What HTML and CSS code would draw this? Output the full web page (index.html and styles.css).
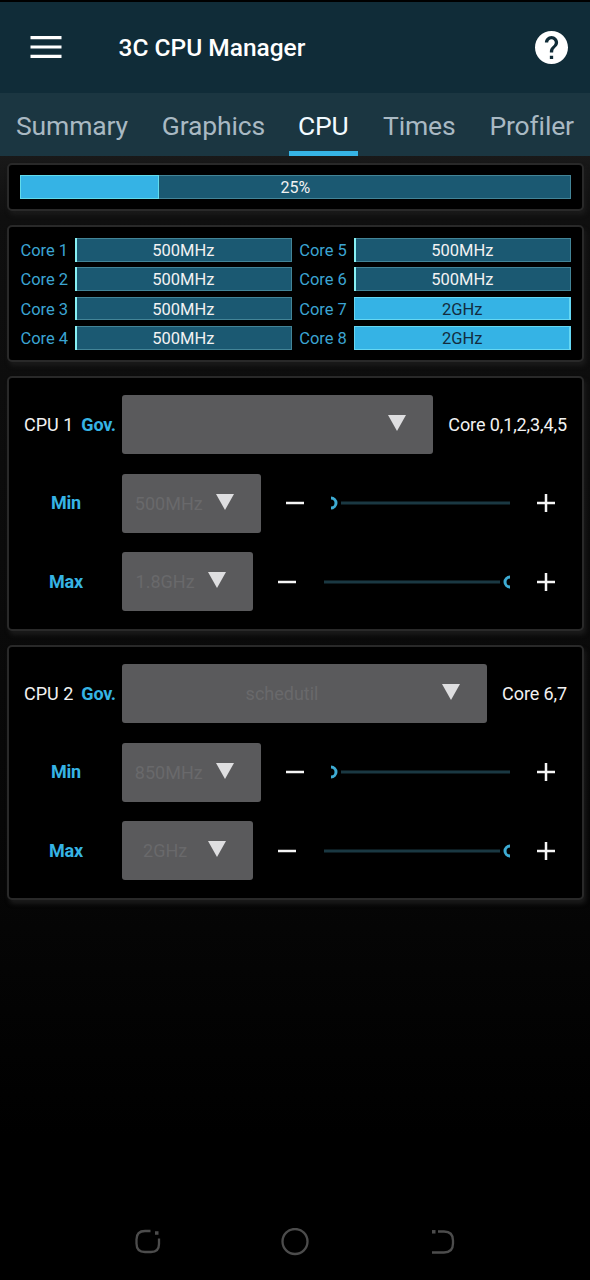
FILE: index.html
```html
<!DOCTYPE html>
<html lang="en">
<head>
<meta charset="utf-8">
<title>3C CPU Manager</title>
<link rel="stylesheet" href="styles.css">
</head>
<body>
<div class="screen">
  <header class="appbar">
    <svg class="menu" viewBox="0 0 32 22"><path d="M.5 1.700h31M.5 11h31M.5 20.300h31" stroke="#fff" stroke-width="3.2"/></svg>
    <h1 class="title">3C CPU Manager</h1>
    <svg class="help" viewBox="2 2 20 20"><path fill="#fff" d="M12 2C6.480 2 2 6.480 2 12s4.480 10 10 10 10-4.480 10-10S17.520 2 12 2zm1 17h-2v-2h2v2zm2.070-7.750l-.9.920C13.450 12.900 13 13.500 13 15h-2v-.5c0-1.100.45-2.100 1.170-2.830l1.240-1.260c.37-.36.59-.86.59-1.410 0-1.100-.9-2-2-2s-2 .9-2 2H8c0-2.210 1.790-4 4-4s4 1.790 4 4c0 .88-.36 1.680-.93 2.250z"/></svg>
  </header>
  <nav class="tabs">
    <span class="tab">Summary</span>
    <span class="tab">Graphics</span>
    <span class="tab active">CPU</span>
    <span class="tab">Times</span>
    <span class="tab">Profiler</span>
  </nav>
  <main class="content">
    <section class="card usage">
      <div class="bar total"><span class="fill"></span><span class="value">25%</span></div>
    </section>
    <section class="card cores">
      <span class="core">Core 1</span><div class="bar"><span class="fill"></span><span class="value">500MHz</span></div>
      <span class="core">Core 5</span><div class="bar"><span class="fill"></span><span class="value">500MHz</span></div>
      <span class="core">Core 2</span><div class="bar"><span class="fill"></span><span class="value">500MHz</span></div>
      <span class="core">Core 6</span><div class="bar"><span class="fill"></span><span class="value">500MHz</span></div>
      <span class="core">Core 3</span><div class="bar"><span class="fill"></span><span class="value">500MHz</span></div>
      <span class="core">Core 7</span><div class="bar full"><span class="fill"></span><span class="value">2GHz</span></div>
      <span class="core">Core 4</span><div class="bar"><span class="fill"></span><span class="value">500MHz</span></div>
      <span class="core">Core 8</span><div class="bar full"><span class="fill"></span><span class="value">2GHz</span></div>
    </section>
    <section class="card cpu">
      <div class="row">
        <div class="label"><span class="name">CPU 1</span><b>Gov.</b></div>
        <div class="select gov"><span class="text"></span><svg class="arrow" viewBox="0 0 18 16"><path d="M0 0h18L9 16z"/></svg></div>
        <span class="which">Core 0,1,2,3,4,5</span>
      </div>
      <div class="row">
        <div class="label mid"><b>Min</b></div>
        <div class="select min"><span class="text">500MHz</span><svg class="arrow" viewBox="0 0 18 16"><path d="M0 0h18L9 16z"/></svg></div>
        <svg class="sign minus" viewBox="0 0 18 18"><path d="M0 9h18"/></svg>
        <svg class="slider" viewBox="0 0 187 18"><path class="track" d="M18 9H187"/><path class="thumb" d="M8 4A5 5 0 0 1 8 14"/></svg>
        <svg class="sign" viewBox="0 0 18 18"><path d="M0 9h18M9 0v18"/></svg>
      </div>
      <div class="row">
        <div class="label mid"><b>Max</b></div>
        <div class="select max"><span class="text">1.8GHz</span><svg class="arrow" viewBox="0 0 18 16"><path d="M0 0h18L9 16z"/></svg></div>
        <svg class="sign minus" viewBox="0 0 18 18"><path d="M0 9h18"/></svg>
        <svg class="slider" viewBox="0 0 187 18"><path class="track" d="M1 9H177"/><path class="thumb" d="M187 4A5 5 0 0 0 187 14"/></svg>
        <svg class="sign" viewBox="0 0 18 18"><path d="M0 9h18M9 0v18"/></svg>
      </div>
    </section>
    <section class="card cpu">
      <div class="row">
        <div class="label"><span class="name">CPU 2</span><b>Gov.</b></div>
        <div class="select gov"><span class="text">schedutil</span><svg class="arrow" viewBox="0 0 18 16"><path d="M0 0h18L9 16z"/></svg></div>
        <span class="which">Core 6,7</span>
      </div>
      <div class="row">
        <div class="label mid"><b>Min</b></div>
        <div class="select min"><span class="text">850MHz</span><svg class="arrow" viewBox="0 0 18 16"><path d="M0 0h18L9 16z"/></svg></div>
        <svg class="sign minus" viewBox="0 0 18 18"><path d="M0 9h18"/></svg>
        <svg class="slider" viewBox="0 0 187 18"><path class="track" d="M18 9H187"/><path class="thumb" d="M8 4A5 5 0 0 1 8 14"/></svg>
        <svg class="sign" viewBox="0 0 18 18"><path d="M0 9h18M9 0v18"/></svg>
      </div>
      <div class="row">
        <div class="label mid"><b>Max</b></div>
        <div class="select max"><span class="text">2GHz</span><svg class="arrow" viewBox="0 0 18 16"><path d="M0 0h18L9 16z"/></svg></div>
        <svg class="sign minus" viewBox="0 0 18 18"><path d="M0 9h18"/></svg>
        <svg class="slider" viewBox="0 0 187 18"><path class="track" d="M1 9H177"/><path class="thumb" d="M187 4A5 5 0 0 0 187 14"/></svg>
        <svg class="sign" viewBox="0 0 18 18"><path d="M0 9h18M9 0v18"/></svg>
      </div>
    </section>
  </main>
  <footer class="navbar">
    <svg class="navicon" viewBox="0 0 28 28"><path d="M16.500 3H11Q2.500 3 2.500 11.500V15.500Q2.500 24 11 24H17Q25 24 25 16V10.500"/><path class="dot" d="M21 5h3.500"/></svg>
    <svg class="navicon" viewBox="0 0 28 28"><circle cx="14" cy="13.500" r="12.500"/></svg>
    <svg class="navicon" viewBox="0 0 28 28"><path d="M10 3.500H16Q25 3.500 25 12.500V15.500Q25 24.500 16 24.500H4"/><path class="dot" d="M4 3.800h3.500"/></svg>
  </footer>
</div>
</body>
</html>
```
FILE: styles.css
```css
* { box-sizing: border-box; }
body { margin: 0; background: #000; font-family: Roboto, "Liberation Sans", sans-serif; color: #f2f2f2; }
svg { display: block; flex: none; }
.screen { width: 590px; height: 1280px; overflow: hidden; display: flex; flex-direction: column; border-top: 2px solid #000; }
.appbar { height: 91px; flex: none; background: #102c38; display: flex; align-items: center; padding: 0 22px 0 30px; }
.menu { width: 32px; height: 22px; margin-bottom: 1px; }
.title { margin: 1px auto 0 56.5px; font-size: 24.5px; line-height: 30px; font-weight: 500; color: #fff; white-space: nowrap; }
.help { width: 33px; height: 33px; margin-bottom: 1px; }
.tabs { height: 63px; flex: none; background: #1b3641; display: flex; justify-content: space-between; padding: 0 8px; }
.tab { padding: 0 8.5px; font-size: 26.5px; letter-spacing: -.15px; line-height: 66px; color: #a9b9c3; white-space: nowrap; }
.tab:first-child { padding-left: 8px; }
.tab:last-child { padding-right: 8px; }
.active { color: #f2fbff; box-shadow: inset 0 -5px #36b3e4; margin-left: -1px; padding-right: 9px; }
.content { flex: 1; background: linear-gradient(#191919 0, #0f0f0f 60px, #0b0b0b 400px, #060606 730px, #000 980px); padding: 6.5px 6px 0 7px; display: flex; flex-direction: column; gap: 14px; }
.card { background: #000; border: 2px solid #292929; border-radius: 5px; box-shadow: 2px 4px 4px #1a1a1a; }
.usage { height: 48.5px; padding: 10px 11px 0 10.5px; }
.bar { position: relative; height: 23.5px; background: #1b5972; border: 1px solid #438497; display: flex; align-items: center; justify-content: center; font-size: 16.5px; line-height: 20px; }
.fill { position: absolute; left: -1px; top: -1px; bottom: -1px; width: 2px; background: #86f0f4; }
.total { height: 24px; font-size: 16px; }
.total .fill { width: 139px; background: #35b3e5; border: 1px solid #62dbec; }
.value { position: relative; padding-top: 2px; }
.full .fill { width: auto; right: -1px; background: #35b3e5; border: 1px solid #65d7f3; border-right-width: 2px; }
.full .value { color: #132c3e; }
.cores { height: 137px; padding: 11px 10px 0 11.4px; display: grid; grid-template-columns: 55px 217px 62px 217px; grid-auto-rows: 23.5px; row-gap: 5.9px; align-content: start; }
.cores .bar { margin: 0 .6px 0 -.6px; }
.core { font-size: 16.5px; line-height: 26px; color: #3ba4d2; }
.core:nth-of-type(even) { padding-left: 6.8px; }
.cpu { height: 255px; padding: 17px 15px 0; display: flex; flex-direction: column; gap: 19.7px; font-size: 18px; }
.row { height: 59px; display: flex; align-items: center; }
.label { width: 98px; flex: none; display: flex; gap: 8px; line-height: 24px; white-space: nowrap; }
.label b { color: #36b3e4; font-weight: 700; letter-spacing: -.2px; }
.mid { justify-content: center; padding-right: 14px; }
.select { height: 59px; background: #5a5a5c; border-radius: 3px; display: flex; align-items: center; color: #69696b; padding-right: 27px; }
.gov { flex: 1; }
.min { width: 138.5px; flex: none; }
.max { width: 131.2px; flex: none; }
.text { flex: 1; text-align: center; }
.arrow { width: 18px; height: 16px; margin-top: -3px; fill: #dedee0; }
.which { margin-left: 15px; white-space: nowrap; letter-spacing: -.1px; }
.sign { width: 18px; height: 18px; fill: none; stroke: #f5f5f5; stroke-width: 2.5; margin-right: 12px; }
.minus { margin: 0 auto 0 25px; }
.slider { width: 187px; height: 18px; margin-right: 27px; fill: none; }
.track { stroke: #1a3842; stroke-width: 3; }
.thumb { stroke: #3dabd3; stroke-width: 3; }
.navbar { height: 76px; flex: none; display: flex; justify-content: space-between; padding: 24px 134px 0; background: #000; }
.navicon { width: 28px; height: 28px; fill: none; stroke: #4c4c4c; stroke-width: 2.3; }
.dot { stroke-width: 3.5; }
```
